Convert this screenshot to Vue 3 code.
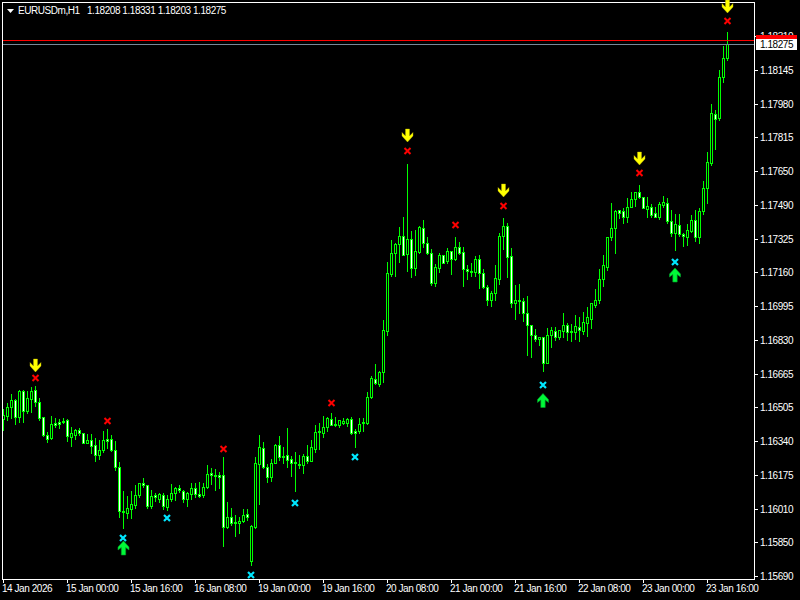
<template>
  <svg class="chart" width="800" height="600" viewBox="0 0 800 600">
    <g shape-rendering="crispEdges">
      <!-- candles -->
      <g v-for="c in candles" :key="c.x">
        <rect :x="c.x" :y="c.high" width="1" :height="c.low - c.high + 1" fill="#00ff00" />
        <rect :x="c.x - 1" :y="c.top" width="3" :height="c.bottom - c.top + 1" fill="#00ff00" />
        <rect
          v-if="c.bottom - c.top > 1"
          :x="c.x"
          :y="c.top + 1"
          width="1"
          :height="c.bottom - c.top - 1"
          :fill="c.bear ? '#ffffff' : '#000000'"
        />
      </g>

      <!-- current price lines -->
      <rect x="3" y="40" width="751" height="1" fill="#ff0000" />
      <rect x="3" y="44" width="751" height="1" fill="#778899" />

      <!-- frame -->
      <rect x="2" y="2" width="753" height="1" fill="#ffffff" />
      <rect x="2" y="2" width="1" height="578" fill="#ffffff" />
      <rect x="754" y="2" width="1" height="578" fill="#ffffff" />
      <rect x="2" y="579" width="753" height="1" fill="#ffffff" />

      <rect v-for="t in priceTicks" :key="t.label" x="755" :y="t.y" width="3" height="1" fill="#ffffff" />
      <rect v-for="t in timeTicks" :key="t.label" :x="t.x" y="580" width="1" height="3" fill="#ffffff" />
    </g>

    <!-- signal markers -->
    <g v-for="m in downArrows" :key="m[0]" :transform="`translate(${m[0]} ${m[1]})`">
      <polygon :points="arrowDown" fill="#ffff00" stroke="#b8b000" stroke-width="0.4" />
    </g>
    <g v-for="m in upArrows" :key="m[0]" :transform="`translate(${m[0]} ${m[1]})`">
      <polygon :points="arrowUp" fill="#00f838" stroke="#009a28" stroke-width="0.6" />
    </g>
    <g v-for="m in redCrosses" :key="m[0]" :transform="`translate(${m[0]} ${m[1]})`">
      <path d="M-3-3L3 3M3-3L-3 3" stroke="#ff0000" stroke-width="2" fill="none" />
    </g>
    <g v-for="m in cyanCrosses" :key="m[0]" :transform="`translate(${m[0]} ${m[1]})`">
      <path d="M-3-3L3 3M3-3L-3 3" stroke="#00e6ff" stroke-width="2.2" fill="none" />
    </g>

    <!-- axis labels -->
    <g class="labels">
      <text v-for="t in priceTicks" :key="t.label" x="760" :y="t.y + 4">{{ t.label }}</text>
      <text v-for="t in timeTicks" :key="t.label" :x="t.x - 1" y="592">{{ t.label }}</text>
      <text x="18" y="14">EURUSDm,H1</text>
      <text x="87" y="14">1.18208 1.18331 1.18203 1.18275</text>
    </g>
    <polygon points="7,9 14,9 10.5,13" fill="#ffffff" />

    <!-- bid/ask labels -->
    <rect x="756" y="35" width="41" height="5" fill="#ff0000" shape-rendering="crispEdges" />
    <rect x="756" y="39" width="41" height="11" fill="#ffffff" shape-rendering="crispEdges" />
    <text class="labels ask" x="760" y="48">1.18275</text>
  </svg>
</template>

<script setup>
// [high, body top, body bottom, low, bear] in screen pixels, one every 4px from x=3
const raw = [
  [409,415,419,430,0],[403,407,416,420,0],[394,400,407,418,0],[399,400,417,424,1],[390,391,417,422,0],
  [390,391,411,422,1],[391,398,411,413,0],[387,391,399,412,0],[386,390,402,406,1],[398,402,418,420,1],
  [417,417,435,436,1],[432,435,439,442,1],[416,424,438,439,0],[418,423,425,427,1],[419,422,424,428,1],
  [418,421,422,423,1],[419,420,436,441,1],[427,433,437,446,0],[429,430,435,439,0],[428,430,433,435,1],
  [433,433,443,443,1],[434,440,443,443,0],[434,440,446,453,1],[438,445,455,461,1],[440,450,455,459,0],
  [431,440,450,452,0],[429,439,441,448,1],[435,439,450,451,1],[441,450,467,470,1],[462,467,511,517,1],
  [491,511,512,528,1],[496,508,513,518,0],[491,504,509,518,0],[485,495,505,508,0],[483,483,495,497,0],
  [478,483,485,487,1],[485,485,506,508,1],[490,496,506,508,0],[493,495,497,501,1],[493,494,499,502,0],
  [493,495,506,509,1],[495,499,507,510,0],[484,493,499,501,0],[487,488,493,500,0],[485,488,490,492,1],
  [490,491,499,502,1],[492,493,499,506,0],[483,488,494,499,0],[483,488,494,497,1],[482,494,496,497,1],
  [483,487,495,497,0],[465,474,487,488,0],[468,473,475,484,1],[469,475,476,490,1],[472,475,477,488,1],
  [457,475,527,546,1],[502,517,527,528,0],[508,517,523,525,1],[515,522,523,536,1],[517,521,523,533,0],
  [509,515,521,522,0],[509,514,517,520,1],[525,526,561,565,0],[457,463,527,528,0],[435,447,464,504,0],
  [442,448,467,468,1],[464,467,477,482,1],[459,463,477,481,0],[444,445,463,463,0],[436,445,457,460,1],
  [447,456,457,463,1],[428,455,460,467,1],[456,459,463,476,1],[452,462,463,491,1],[455,464,465,468,1],
  [454,456,465,473,0],[445,456,461,463,1],[440,447,461,461,0],[425,432,449,452,0],[423,431,432,449,1],
  [416,427,433,437,0],[417,418,427,431,0],[413,419,425,425,1],[417,424,425,426,1],[420,420,425,427,0],
  [418,421,423,424,0],[418,419,423,426,0],[417,419,433,434,1],[429,431,433,447,1],[418,424,431,433,0],
  [418,422,423,431,1],[392,397,423,424,0],[376,378,397,398,0],[364,379,383,384,1],[371,372,384,386,0],
  [320,330,372,382,0],[262,273,331,335,0],[240,253,274,276,0],[243,244,253,276,0],[227,236,244,262,0],
  [217,236,255,255,1],[164,239,254,271,0],[231,239,268,277,1],[230,251,268,275,0],[226,227,252,253,0],
  [220,228,243,247,1],[237,243,253,254,1],[249,253,283,285,1],[264,267,283,286,0],[253,255,268,272,0],
  [255,255,263,263,1],[248,251,261,263,0],[251,251,259,274,1],[237,247,259,260,0],[242,247,253,254,1],
  [247,252,269,286,1],[265,269,271,279,1],[263,271,272,276,1],[256,259,272,276,0],[255,259,273,288,1],
  [269,273,287,288,1],[285,287,300,305,1],[291,293,300,306,0],[265,278,293,300,0],[233,236,279,284,0],
  [218,226,236,249,0],[223,226,257,277,1],[248,256,303,307,1],[285,300,303,319,0],[284,300,301,313,1],
  [298,301,313,321,1],[296,313,325,355,1],[325,325,335,357,1],[329,335,339,341,1],[337,337,339,345,0],
  [337,337,363,371,1],[328,335,363,363,0],[327,330,335,347,0],[327,331,337,340,1],[330,330,337,339,0],
  [313,325,331,337,0],[323,325,332,340,1],[324,331,332,341,1],[315,326,332,339,0],[317,327,330,341,1],
  [312,322,331,334,0],[307,317,323,336,0],[303,303,319,328,0],[289,300,305,307,0],[269,279,300,303,0],
  [255,265,279,286,0],[237,237,267,270,0],[203,228,237,240,0],[210,211,228,253,0],[210,210,213,218,1],
  [208,211,217,223,1],[198,207,217,222,0],[192,199,207,207,0],[192,192,199,206,0],[185,192,197,198,1],
  [197,197,208,208,1],[197,206,209,217,0],[204,207,215,217,1],[207,213,217,217,1],[202,204,217,219,0],
  [196,202,205,207,0],[198,203,221,223,1],[210,221,233,236,1],[214,224,233,250,0],[214,225,234,236,1],
  [233,234,236,246,1],[224,230,237,245,0],[215,220,231,232,0],[210,220,237,241,1],[208,211,237,243,0],
  [181,188,211,214,0],[152,162,188,203,0],[104,113,163,165,0],[110,114,119,149,1],[70,77,118,120,0],
  [46,58,77,82,0],[32,44,58,60,0],
]

const candles = raw.map((c, i) => ({
  x: 3 + i * 4,
  high: c[0],
  top: c[1],
  bottom: c[2],
  low: c[3],
  bear: c[4] === 1,
}))

const prices = [
  '1.18310', '1.18145', '1.17980', '1.17815', '1.17650', '1.17490', '1.17325', '1.17160', '1.16995',
  '1.16830', '1.16665', '1.16505', '1.16340', '1.16175', '1.16010', '1.15850', '1.15690',
]
const priceTicks = prices.map((label, i) => ({ label, y: Math.round(36 + i * 33.75) }))

const times = [
  '14 Jan 2026', '15 Jan 00:00', '15 Jan 16:00', '16 Jan 08:00', '19 Jan 00:00', '19 Jan 16:00',
  '20 Jan 08:00', '21 Jan 00:00', '21 Jan 16:00', '22 Jan 08:00', '23 Jan 00:00', '23 Jan 16:00',
]
const timeTicks = times.map((label, i) => ({ label, x: 3 + i * 64 }))

const arrowDown = '-2,0 2,0 2,7 5.5,3.5 5.5,7 0,13 -5.5,7 -5.5,3.5 -2,7'
const arrowUp = '0,0 5.5,6 5.5,9 2.2,6.5 2.2,14 -2.2,14 -2.2,6.5 -5.5,9 -5.5,6'

const downArrows = [[35.5, 359], [407.5, 129], [503.5, 184], [639.5, 152], [727.5, 0]]
const upArrows = [[123.5, 541], [543, 393.5], [675, 268]]
const redCrosses = [
  [35.5, 378], [107.5, 421], [223.5, 449], [331.5, 403], [407.5, 151], [455.5, 225], [503.5, 206], [639.5, 173],
  [727.5, 21],
]
const cyanCrosses = [[123, 538], [167, 518], [251, 575], [295, 503], [355, 457], [543, 385], [675, 262]]
</script>

<style scoped>
.chart {
  display: block;
  background: #000000;
}

.labels {
  font-family: "Liberation Sans", Arial, sans-serif;
  font-size: 10px;
  letter-spacing: -0.45px;
  fill: #ffffff;
}

.ask {
  fill: #000000;
}
</style>

<style>
html,
body {
  margin: 0;
  background: #000000;
}
</style>
